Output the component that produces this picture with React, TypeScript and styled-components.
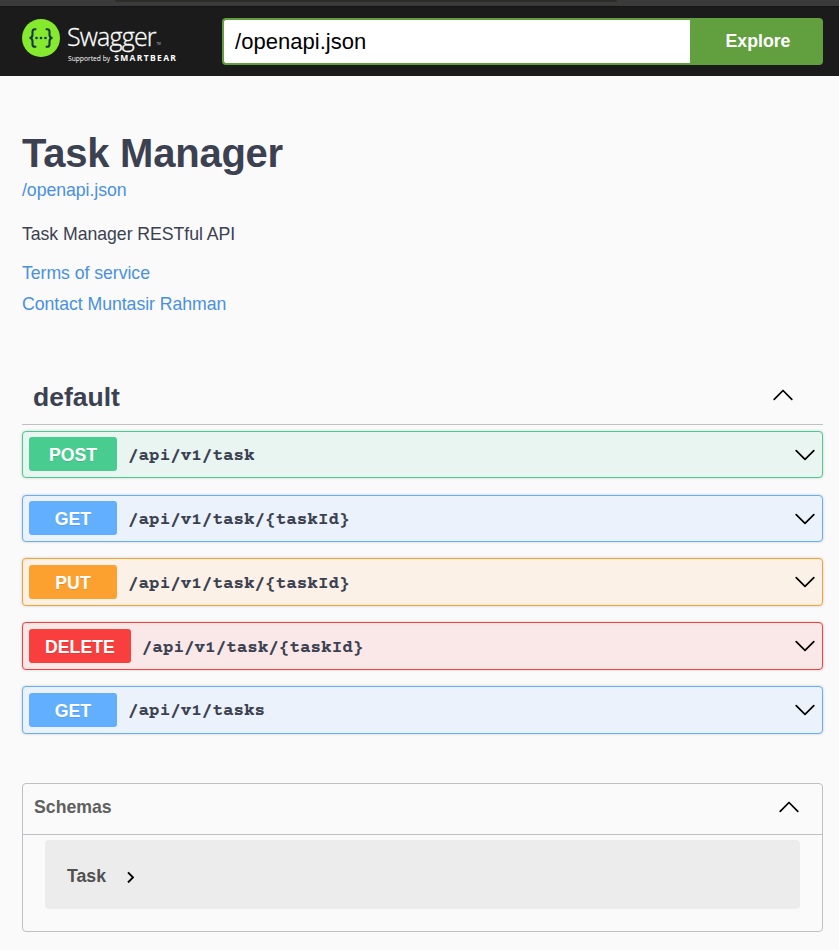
import React from "react";
import styled, { createGlobalStyle } from "styled-components";

const GlobalStyle = createGlobalStyle`
  *, *::before, *::after { box-sizing: border-box; }
  body {
    margin: 0;
    background: #fafafa;
    color: #3b4151;
    font-family: "Liberation Sans", Arial, Helvetica, sans-serif;
  }
`;

const Page = styled.div`
  height: 950px;
  overflow: hidden;
`;

const WindowEdge = styled.div`
  height: 7px;
  background: #3b3b3b;
  border-bottom: 1px solid #141414;
  padding-left: 115px;
`;

const AddressBar = styled.div`
  width: 502px;
  height: 2px;
  background: #2c2d26;
  border-radius: 0 0 3px 3px;
`;

const Topbar = styled.header`
  height: 69px;
  background: #1b1b1b;
  display: flex;
  align-items: flex-start;
  padding: 11px 16px 0 22px;
`;

const Brand = styled.div`
  width: 200px;
  display: flex;
  gap: 7px;
  padding-top: 1px;
`;

const BrandMark = styled.svg`
  flex: none;
  width: 38px;
  height: 38px;
`;

const BrandText = styled.div`
  font-family: "Open Sans", sans-serif;
  color: #fff;
  white-space: nowrap;
`;

const BrandName = styled.div`
  display: flex;
  align-items: flex-end;
  height: 35px;
  font-size: 25px;
  line-height: 35px;
  font-weight: 300;
  letter-spacing: -0.8px;
  -webkit-text-stroke: 0.3px #fff;
`;

const Trademark = styled.span`
  font-size: 3px;
  line-height: 3px;
  letter-spacing: 0;
  margin: 0 0 8px 1px;
  -webkit-text-stroke: 0;
`;

const BrandTagline = styled.div`
  display: flex;
  align-items: baseline;
  gap: 4px;
  height: 9px;
  padding-left: 1px;
  line-height: 8px;
  font-size: 6.7px;
`;

const BrandOwner = styled.span`
  font-size: 8.5px;
  font-weight: 700;
  letter-spacing: 1.35px;
`;

const UrlForm = styled.div`
  flex: 1;
  display: flex;
  height: 47px;
`;

const UrlInput = styled.input`
  flex: 1;
  min-width: 0;
  border: 2px solid #62a03f;
  border-right: 0;
  border-radius: 4px 0 0 4px;
  background: #fff;
  color: #000;
  padding: 0 11px;
  font: 22px "Liberation Sans", Arial, sans-serif;
  letter-spacing: 0.03px;
  outline: none;
`;

const ExploreButton = styled.button`
  width: 133px;
  border: 0;
  border-radius: 0 4px 4px 0;
  background: #62a03f;
  color: #fff;
  padding: 0 0 1px 3px;
  font: bold 17.7px "Liberation Sans", Arial, sans-serif;
`;

const Content = styled.main`
  padding: 0 16px 0 22px;
`;

const Info = styled.section`
  height: 293px;
  padding-top: 54px;
  display: flex;
  flex-direction: column;
  align-items: flex-start;
`;

const Title = styled.h2`
  margin: 0;
  font-size: 40px;
  line-height: 46px;
  letter-spacing: -0.24px;
`;

const InfoLine = styled.div<{ $gap?: number }>`
  margin-top: ${(p) => p.$gap ?? 0}px;
  font-size: 17.7px;
  line-height: 20px;
  letter-spacing: -0.05px;
`;

const InfoLink = styled(InfoLine).attrs({ as: "a" })`
  color: #4990e2;
`;

const TagHeader = styled.h3`
  height: 56px;
  margin: 0 0 5.8px;
  padding: 0 30px 0 11px;
  display: flex;
  align-items: center;
  justify-content: space-between;
  border-bottom: 1px solid #bfc0c4;
  font-size: 26.5px;

  span {
    padding-top: 1px;
  }

  svg {
    margin-bottom: 3px;
  }
`;

const Operations = styled.div`
  display: flex;
  flex-direction: column;
  gap: 16.2px;
`;

const Operation = styled.div<{ $color: string; $tint: string }>`
  height: 47.6px;
  display: flex;
  align-items: flex-start;
  padding: 5.65px 7px 0 6px;
  border: 1px solid ${(p) => p.$color};
  border-radius: 4px;
  background: ${(p) => p.$tint};
  box-shadow: 0 0 3px rgba(0, 0, 0, 0.19);

  svg {
    margin-top: 11.3px;
  }
`;

const Method = styled.span<{ $color: string }>`
  min-width: 88px;
  height: 34px;
  padding: 0 16px;
  border-radius: 3px;
  background: ${(p) => p.$color};
  color: #fff;
  font-size: 17.7px;
  line-height: 36px;
  font-weight: 700;
  text-align: center;
  text-shadow: 0 1px 0 rgba(0, 0, 0, 0.1);
`;

const Path = styled.span`
  flex: 1;
  padding: 8.8px 0 0 11px;
  font-family: "Courier Prime", "Liberation Mono", monospace;
  font-size: 17.6px;
  line-height: 20px;
  font-weight: 700;
`;

const Schemas = styled.section`
  height: 149px;
  margin-top: 49.4px;
  border: 1px solid #bfc0c4;
  border-radius: 4px;
`;

const SchemasHeader = styled.h4`
  height: 51px;
  margin: 0;
  padding: 0 23px 3px 11px;
  display: flex;
  align-items: center;
  justify-content: space-between;
  border-bottom: 1px solid #bfc0c4;
  color: #606060;
  font-size: 17.7px;
`;

const Model = styled.div`
  height: 69px;
  margin: 5px 22px 0;
  padding: 4px 22px 0;
  display: flex;
  align-items: center;
  gap: 20px;
  border-radius: 4px;
  background: #ececec;
  color: #505050;
  font-size: 17.7px;
  font-weight: 700;
`;

const Arrow = styled.svg`
  flex: none;
  fill: none;
  stroke: #000;
  stroke-width: 1.7;
  stroke-linecap: round;
  stroke-linejoin: round;
`;

const ChevronUp = () => (
  <Arrow width="20" height="12" viewBox="0 0 20 12">
    <path d="M1.2 10.3 L10 1.5 L18.8 10.3" />
  </Arrow>
);

const ChevronDown = () => (
  <Arrow width="20" height="12" viewBox="0 0 20 12">
    <path d="M1.2 1.6 L10 10.4 L18.8 1.6" />
  </Arrow>
);

const ChevronRight = () => (
  <Arrow width="9" height="14" viewBox="0 0 9 14">
    <path d="M2 3.4 L7 8.4 L2 13.4" strokeWidth="2" strokeLinecap="butt" />
  </Arrow>
);

const Logo = () => (
  <BrandMark viewBox="0 0 38 38">
    <circle cx="19" cy="19" r="19" fill="#85ea2d" />
    <g fill="none" stroke="#173647" strokeWidth="2.1">
      <path d="M14.3 10.2H13c-1.8 0-2.5.8-2.5 2.4v3.2c0 2-.7 3.2-3 3.2c2.3 0 3 1.2 3 3.2v3.2c0 1.6.7 2.4 2.5 2.4h1.3" />
      <path d="M23.7 10.2H25c1.8 0 2.5.8 2.5 2.4v3.2c0 2 .7 3.2 3 3.2c-2.3 0-3 1.2-3 3.2v3.2c0 1.6-.7 2.4-2.5 2.4h-1.3" />
    </g>
    <g fill="#173647">
      <circle cx="14.5" cy="19" r="1.3" />
      <circle cx="19" cy="19" r="1.3" />
      <circle cx="23.5" cy="19" r="1.3" />
    </g>
  </BrandMark>
);

const palette = {
  POST: { color: "#49cc90", tint: "#e8f5f0" },
  GET: { color: "#61affe", tint: "#ebf2fb" },
  PUT: { color: "#fca130", tint: "#fbf1e6" },
  DELETE: { color: "#f93e3e", tint: "#fae7e7" },
};

const operations: { method: keyof typeof palette; path: string }[] = [
  { method: "POST", path: "/api/v1/task" },
  { method: "GET", path: "/api/v1/task/{taskId}" },
  { method: "PUT", path: "/api/v1/task/{taskId}" },
  { method: "DELETE", path: "/api/v1/task/{taskId}" },
  { method: "GET", path: "/api/v1/tasks" },
];

export default function App() {
  return (
    <>
      <GlobalStyle />
      <Page>
        <WindowEdge>
          <AddressBar />
        </WindowEdge>
        <Topbar>
          <Brand>
            <Logo />
            <BrandText>
              <BrandName>
                Swagger<Trademark>TM</Trademark>
              </BrandName>
              <BrandTagline>
                Supported by <BrandOwner>SMARTBEAR</BrandOwner>
              </BrandTagline>
            </BrandText>
          </Brand>
          <UrlForm>
            <UrlInput defaultValue="/openapi.json" />
            <ExploreButton>Explore</ExploreButton>
          </UrlForm>
        </Topbar>
        <Content>
          <Info>
            <Title>Task Manager</Title>
            <InfoLink $gap={4}>/openapi.json</InfoLink>
            <InfoLine $gap={24}>Task Manager RESTful API</InfoLine>
            <InfoLink $gap={19}>Terms of service</InfoLink>
            <InfoLink $gap={11}>Contact Muntasir Rahman</InfoLink>
          </Info>
          <TagHeader>
            <span>default</span>
            <ChevronUp />
          </TagHeader>
          <Operations>
            {operations.map(({ method, path }) => (
              <Operation
                key={method + path}
                $color={palette[method].color}
                $tint={palette[method].tint}
              >
                <Method $color={palette[method].color}>{method}</Method>
                <Path>{path}</Path>
                <ChevronDown />
              </Operation>
            ))}
          </Operations>
          <Schemas>
            <SchemasHeader>
              Schemas
              <ChevronUp />
            </SchemasHeader>
            <Model>
              Task
              <ChevronRight />
            </Model>
          </Schemas>
        </Content>
      </Page>
    </>
  );
}
